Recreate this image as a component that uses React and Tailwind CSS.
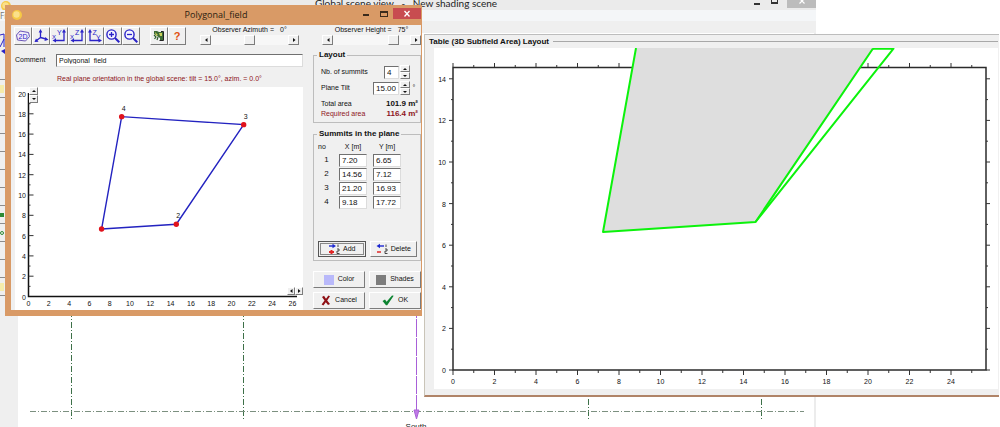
import React from "react";

const UI = "font-['Liberation_Sans',sans-serif]";
const RAISED = "border border-t-white border-l-white border-r-[#7c7c7c] border-b-[#7c7c7c] bg-[#f0f0f0]";
const SUNKEN = "border border-t-[#707070] border-l-[#707070] border-r-[#dcdcdc] border-b-[#dcdcdc] bg-white";

/* ---------- small drawings ---------- */

function Sun() {
  return (
    <svg viewBox="0 0 12 12" className="size-3 shrink-0" aria-hidden="true">
      <circle cx="6" cy="6" r="5" fill="#f6c945" />
      <circle cx="5.5" cy="5.5" r="3.2" fill="#fbe08a" />
    </svg>
  );
}

function Arrow({ dir }) {
  const points = {
    left: "5.5,2 5.5,6 3,4",
    right: "3,2 3,6 5.5,4",
    up: "2,5 6,5 4,3",
    down: "2,3 6,3 4,5",
  }[dir];
  return (
    <svg viewBox="0 0 8 8" className="size-2 shrink-0" aria-hidden="true">
      <polygon points={points} fill="#111" />
    </svg>
  );
}

function AxesIcon({ kind }) {
  const blue = "#2a22c8";
  const common = { viewBox: "0 0 16 16", className: "size-4", "aria-hidden": true };
  const label = { fontSize: 7, fill: blue, fontFamily: "Liberation Sans, sans-serif" };
  if (kind === "2d") {
    return (
      <svg {...common}>
        <path d="M1.5 7 L5 3 L13.500 4.500 L14.500 8.500 L10.500 13 L2.500 12 Z" fill="#f1edf9" stroke="#6a55b8" strokeWidth="1" />
        <text x="3.5" y="11" {...label}>2D</text>
      </svg>
    );
  }
  if (kind === "3d") {
    return (
      <svg {...common} stroke={blue} fill={blue} strokeWidth="1.3">
        <path d="M7.500 9.5 V3 M7.500 9.5 L13 11 M7.500 9.5 L3.500 12.500" fill="none" />
        <path d="M7.500 1 L9.3 4.500 H5.7 Z M15.500 11.700 L11.500 13 L12.300 9 Z M1.500 14 L3 10.500 L5.500 13.8 Z" stroke="none" />
      </svg>
    );
  }
  if (kind === "zy") {
    return (
      <svg {...common}>
        <path d="M3 3 V12.5 H12" fill="none" stroke={blue} strokeWidth="1.3" />
        <path d="M3 1 L5 4.5 H1 Z M15 12.5 L11.5 14.5 V10.5 Z" fill={blue} />
        <text x="5.5" y="6.5" {...label}>Z</text>
        <text x="9" y="11.500" {...label}>Y</text>
      </svg>
    );
  }
  return (
    <svg {...common}>
      <path d="M13 3 V12.5 H4" fill="none" stroke={blue} strokeWidth="1.3" />
      <path d="M13 1 L15 4.5 H11 Z M1.5 12.5 L5 14.5 V10.5 Z" fill={blue} />
      <text x="6" y="6.5" {...label}>{kind === "xy" ? "Y" : "Z"}</text>
      <text x="1" y="10.500" {...label} fontSize="6">X</text>
    </svg>
  );
}

function ZoomIcon({ plus }) {
  return (
    <svg viewBox="0 0 16 16" className="size-4" fill="none" stroke="#2a22c8" aria-hidden="true">
      <circle cx="6.5" cy="6.5" r="4.6" strokeWidth="1.4" fill="#f4f4ff" />
      <path d="M10 10 L14.3 14.3" strokeWidth="2" />
      <path d={plus ? "M4 6.5 H9 M6.5 4 V9" : "M4 6.5 H9"} strokeWidth="1.3" />
    </svg>
  );
}

function ExitIcon() {
  return (
    <svg viewBox="0 0 16 16" className="size-4" aria-hidden="true">
      <path d="M3 3 H6 L8 4 H12 V12 H9 V10 L6 8 L3 6 Z" fill="#3b6a35" />
      <path d="M4 4 L7 7 L5 8 Z M8 5 H11 V8 H9 Z" fill="#c9cf5a" />
      <path d="M10 3.500 H12.500 V12.500 H8.500" fill="none" stroke="#222" strokeWidth="1" />
      <path d="M3 7 L5 9 L3.500 11 M7 9 L6 12" fill="none" stroke="#2d5c2b" strokeWidth="1.200" />
    </svg>
  );
}

function SummitIcon({ add }) {
  return (
    <svg viewBox="0 0 13 12" className="h-3 w-[13px] shrink-0" aria-hidden="true">
      {add ? (
        <>
          <path d="M1 3 H5" stroke="#1d28d0" strokeWidth="1.4" />
          <path d="M8 3 L4.5 .8 V5.2 Z" fill="#1d28d0" />
          <path d="M1 9 H6 M3.500 7 V11" stroke="#e02828" strokeWidth="2" />
        </>
      ) : (
        <>
          <path d="M4 3 H8" stroke="#1d28d0" strokeWidth="1.4" />
          <path d="M.5 3 L4 .8 V5.2 Z" fill="#1d28d0" />
          <path d="M1 9 H5" stroke="#e02828" strokeWidth="1.5" />
        </>
      )}
      <path d="M10 1.5 V4 M9 6 H11 V8 H9 V10.5 H11.5" fill="none" stroke="#333" strokeWidth=".9" />
    </svg>
  );
}

function CrossMark() {
  return (
    <svg viewBox="0 0 10 11" className="h-[11px] w-2.5" aria-hidden="true">
      <path d="M1 2 L3 .8 L5 3.8 L7.4 .6 L9 1.2 L6.2 5.4 L9 9 L7 10 L4.8 7.2 L2.4 10.4 L.6 9.6 L3.5 5.4 Z" fill="#8e0f14" />
    </svg>
  );
}

function CheckMark() {
  return (
    <svg viewBox="0 0 12 11" className="h-[11px] w-3" aria-hidden="true">
      <path d="M.5 6 L3 4.600 L4.6 6.800 L10 .6 L11.7 .8 L5.200 10.300 H4 Z" fill="#0d8431" />
    </svg>
  );
}

/* ---------- background window ---------- */

const sideTools = ["", "paper", "", "", "", "", "", "", "flag", "loop", "", "", "paper"];

function SceneWindow() {
  return (
    <section className="absolute inset-y-0 left-0 flex w-[816px] flex-col overflow-hidden bg-white">
      <header className="flex h-2.5 shrink-0 bg-[#ebebeb] font-['Lato',sans-serif]">
        <div className="w-[315px]"><Sun /></div>
        <h1 className="flex-1 text-[10px] leading-[6px] whitespace-pre text-[#222]">Global scene view   -   New shading scene</h1>
        <div className="flex h-2 items-start gap-[9px]">
          <button aria-label="Minimize scene" className="flex h-1.5 w-2 items-center pt-px"><span className="h-0.5 w-1.5 bg-[#333]" /></button>
          <button aria-label="Restore scene" className="h-1 w-[7px] border border-t-0 border-b-2 border-[#333]" />
          <button aria-label="Close scene" className="flex h-2 w-[29px] items-start justify-center bg-[#bcbcbc]">
            <svg viewBox="0 0 6 4" className="h-1 w-1.5" stroke="white" strokeWidth="1.2" aria-hidden="true"><path d="M0 -2 L5.500 3.500 M6 -2 L.5 3.500" /></svg>
          </button>
        </div>
      </header>
      <nav className="h-[11px] shrink-0 bg-[#f4f6f8] text-[8px] leading-[12px] text-[#777]">Fi</nav>
      <div className="h-3 shrink-0 bg-[#efefef]" />
      <div className="flex min-h-0 flex-1">
        <aside className="w-[18px] shrink-0 bg-[#efefef]">
          <svg viewBox="0 26 18 29" className="h-[29px] w-[18px]" aria-hidden="true">
            <path d="M0 28 L4 27 V40 M4 32 L0 40" stroke="#2a22c8" fill="none" />
            <path d="M1 44 L5 42 V47 Z" fill="#2a22c8" />
          </svg>
          {sideTools.map((mark, i) => (
            <div key={i} className="flex h-[18px] items-center border-b border-[#8c8c8c]">
              {mark === "flag" && <span className="h-1 w-1 bg-[#2c8a35]" />}
              {mark === "loop" && <span className="h-1 w-1 rounded-full border border-[#2c8a35]" />}
              {mark === "paper" && <span className="h-2 w-1 bg-[#f5ecab]" />}
            </div>
          ))}
        </aside>
        <svg viewBox="18 33 796 394" className="h-[394px] w-[796px]" role="img" aria-label="Global scene">
          <g stroke="#3d7048" strokeDasharray="6 2 1 2" fill="none">
            <path d="M71.5 300 V419 M243.5 300 V419 M588.5 300 V419 M761.5 300 V419" />
            <path d="M30 411.5 H804" stroke="#7c9080" />
          </g>
          <path d="M416.5 300 V412" stroke="#a860d8" strokeDasharray="18 1" />
          <path d="M414 410 L416.5 419 L419 410 Z" fill="#c07ae6" stroke="#a860d8" />
          <text x="416" y="429" textAnchor="middle" fontSize="8" fill="#222" fontFamily="Liberation Sans, sans-serif">South</text>
        </svg>
        <div className="w-0.5 bg-[#ececec]" />
      </div>
    </section>
  );
}

/* ---------- subfield layout window ---------- */

function TableLayoutWindow() {
  const x = (v) => 453 + v * 20.75;
  const y = (v) => 370 - v * 20.8;
  const xs = Array.from({ length: 26 }, (_, i) => i);
  const ys = Array.from({ length: 15 }, (_, i) => i);
  return (
    <section className="absolute top-[34px] right-px left-[424px] border-t border-l border-b-2 border-t-[#bdbdbd] border-l-[#c9c4b8] border-b-[#b08468] bg-[#f0f0f0] pr-px pb-1.5 pl-1">
      <div className="flex h-[13px] items-center gap-1">
        <h2 className={`${UI} text-[8px] leading-[13px] font-bold text-[#111]`}>Table (3D Subfield Area) Layout</h2>
        <div className="h-px flex-1 bg-[#a8a8a8]" />
      </div>
      <div className="pl-[5px]">
        <svg viewBox="434 48 564 341" className="block h-auto w-full bg-white" role="img" aria-label="Subfield area plot" fontFamily="Liberation Sans, sans-serif" fontSize="7" fill="#111">
          <rect x="453" y="67.5" width="533" height="302.5" fill="white" stroke="#2b2b2b" strokeWidth="1.5" />
          <g stroke="#333">
            {xs.map((v) => (
              <path key={v} d={`M${x(v)} 370 v${v % 2 ? 3 : 5} M${x(v)} 67 v${v % 2 ? -2 : -4}`} />
            ))}
            {ys.map((v) => (
              <path key={v} d={`M453 ${y(v)} h${v % 2 ? -2 : -4} M986 ${y(v)} h${v % 2 ? 2 : 4}`} />
            ))}
          </g>
          {xs.filter((v) => v % 2 === 0).map((v) => (
            <text key={v} x={x(v)} y="384" textAnchor="middle">{v}</text>
          ))}
          {ys.filter((v) => v % 2 === 0).map((v) => (
            <text key={v} x="446" y={y(v) + 3} textAnchor="end">{v}</text>
          ))}
          <path d="M636 48 L603 232 L755.5 222 L873 48 Z" fill="#dedede" />
          <g fill="none" stroke="#0cf20c" strokeWidth="2" strokeLinejoin="round">
            <path d="M636 48 L603 232 L755.5 222 L873 48.5" />
            <path d="M873 48.7 H893.5 L755.5 222" />
          </g>
        </svg>
      </div>
    </section>
  );
}

/* ---------- polygon dialog ---------- */

function ScrollControl({ id, label, value, min, max, shown }) {
  return (
    <div className="w-[99px]">
      <label htmlFor={id} className="flex h-2.5 items-center justify-center gap-1.5 leading-[10px] whitespace-pre">
        <span>{label} =</span><span>{shown}</span>
      </label>
      <div className="flex h-2.5 bg-[#f7f7f7]">
        <button aria-label={`Decrease ${label}`} className={`flex w-[11px] items-center justify-center ${RAISED}`}><Arrow dir="left" /></button>
        <input
          id={id}
          type="range"
          min={min}
          max={max}
          defaultValue={value}
          className="h-2.5 min-w-0 flex-1 appearance-none bg-[#f7f7f7] [&::-webkit-slider-thumb]:h-2.5 [&::-webkit-slider-thumb]:w-[11px] [&::-webkit-slider-thumb]:appearance-none [&::-webkit-slider-thumb]:border [&::-webkit-slider-thumb]:border-t-white [&::-webkit-slider-thumb]:border-r-[#7c7c7c] [&::-webkit-slider-thumb]:border-b-[#7c7c7c] [&::-webkit-slider-thumb]:border-l-white [&::-webkit-slider-thumb]:bg-[#f0f0f0]"
        />
        <button aria-label={`Increase ${label}`} className={`flex w-[11px] items-center justify-center ${RAISED}`}><Arrow dir="right" /></button>
      </div>
    </div>
  );
}

function ToolButton({ label, children }) {
  return (
    <button aria-label={label} className={`flex size-[18px] items-center justify-center ${RAISED}`}>{children}</button>
  );
}

function Spinner({ name }) {
  return (
    <div className="flex w-2.5 flex-col">
      <button aria-label={`Increase ${name}`} className={`flex h-[7px] items-center justify-center overflow-hidden ${RAISED}`}><Arrow dir="up" /></button>
      <button aria-label={`Decrease ${name}`} className={`flex h-[7px] items-center justify-center overflow-hidden ${RAISED}`}><Arrow dir="down" /></button>
    </div>
  );
}

const summits = [
  { no: 1, x: "7.20", y: "6.65" },
  { no: 2, x: "14.56", y: "7.12" },
  { no: 3, x: "21.20", y: "16.93" },
  { no: 4, x: "9.18", y: "17.72" },
];

function PolygonPlot() {
  const px = (v) => 28.5 + v * 10.15;
  const py = (v) => 296.5 - v * 10.15;
  const xs = Array.from({ length: 14 }, (_, i) => i * 2);
  const ys = Array.from({ length: 21 }, (_, i) => i);
  const outline = summits.map((s) => `${px(+s.x)},${py(+s.y)}`).join(" ");
  return (
    <div className="relative">
      <svg viewBox="15 87 288 223" className="block h-[223px] w-72 bg-white" role="img" aria-label="Polygon plot" fontFamily="Liberation Sans, sans-serif" fontSize="7" fill="#111">
        <path d="M28.5 93 V296.5 H297" fill="none" stroke="#111" strokeWidth="1.5" />
        <g stroke="#333">
          {ys.slice(1).map((v) => (
            <path key={v} d={`M28.5 ${py(v)} h${v % 2 ? 2 : 5}`} />
          ))}
        </g>
        {xs.map((v) => (
          <text key={v} x={px(v)} y="306" textAnchor="middle">{v}</text>
        ))}
        {ys.filter((v) => v % 2 === 0).map((v) => (
          <text key={v} x="26" y={py(v) + 3} textAnchor="end">{v}</text>
        ))}
        <polygon points={outline} fill="none" stroke="#2323c0" strokeWidth="1.4" />
        {summits.map((s) => (
          <circle key={s.no} cx={px(+s.x)} cy={py(+s.y)} r="2.7" fill="#e0121c" />
        ))}
        {summits.slice(1).map((s) => (
          <text key={s.no} x={px(+s.x) + 2} y={py(+s.y) - 6} textAnchor="middle">{s.no}</text>
        ))}
      </svg>
      <div className="absolute top-0 left-3.5 flex w-[9px] flex-col">
        <button aria-label="Scroll up" className={`flex h-2 items-center justify-center overflow-hidden ${RAISED}`}><Arrow dir="up" /></button>
        <button aria-label="Scroll down" className={`flex h-2 items-center justify-center overflow-hidden ${RAISED}`}><Arrow dir="down" /></button>
      </div>
      <div className="absolute right-0 bottom-[15px] flex h-2">
        <button aria-label="Scroll left" className={`flex w-2 items-center justify-center overflow-hidden ${RAISED}`}><Arrow dir="left" /></button>
        <button aria-label="Scroll right" className={`flex w-2 items-center justify-center overflow-hidden ${RAISED}`}><Arrow dir="right" /></button>
      </div>
    </div>
  );
}

function PushButton({ icon, children }) {
  return (
    <button className={`flex h-[17px] items-center justify-center gap-1 ${RAISED}`}>{icon}{children}</button>
  );
}

function PolygonDialog() {
  const cell = `h-[13px] w-7 px-0.5 text-[8px] leading-[11px] ${SUNKEN}`;
  return (
    <section className="absolute top-[5px] left-[5px] w-[417px] bg-[#d99a66] pr-px pb-1.5 pl-1.5">
      <header className="grid h-5 grid-cols-[1fr_auto_1fr] items-center font-['Open_Sans','Noto_Sans',sans-serif]">
        <Sun />
        <h2 className="text-[9px] text-[#2a1c10]">Polygonal_field</h2>
        <div className="flex h-full items-start justify-end pt-[3px]">
          <button aria-label="Minimize" className="flex h-[11px] w-[18px] items-end justify-center pb-[3px]"><span className="h-0.5 w-1.5 bg-[#3a2a1c]" /></button>
          <button aria-label="Maximize" className="flex h-[11px] w-[18px] items-center justify-center"><span className="h-1.5 w-2 border border-t-2 border-[#3a2a1c]" /></button>
          <button aria-label="Close" className="flex h-[11px] w-7 items-center justify-center bg-[#c84c50]">
            <svg viewBox="0 0 8 8" className="size-2" stroke="white" strokeWidth="1.3" aria-hidden="true"><path d="M1.5 1 L6.5 6.5 M6.5 1 L1.5 6.5" /></svg>
          </button>
        </div>
      </header>
      <div className={`bg-[#f0f0f0] text-[7px] text-[#111] ${UI}`}>
        <div className="flex h-[21px] justify-between pl-[3px]">
          <div className="flex pt-0.5">
            <ToolButton label="2D view"><AxesIcon kind="2d" /></ToolButton>
            <ToolButton label="Perspective"><AxesIcon kind="3d" /></ToolButton>
            <ToolButton label="Top view"><AxesIcon kind="xy" /></ToolButton>
            <ToolButton label="Front view"><AxesIcon kind="xz" /></ToolButton>
            <ToolButton label="Side view"><AxesIcon kind="zy" /></ToolButton>
            <ToolButton label="Zoom in"><ZoomIcon plus /></ToolButton>
            <ToolButton label="Zoom out"><ZoomIcon /></ToolButton>
            <div className="w-2.5" />
            <ToolButton label="Exit"><ExitIcon /></ToolButton>
            <ToolButton label="Help"><span className="text-[11px] font-bold text-[#e05010]">?</span></ToolButton>
          </div>
          <div className="flex gap-[23px]">
            <ScrollControl id="azimuth" label="Observer Azimuth" value={0} min={-90} max={90} shown="0°" />
            <ScrollControl id="height" label="Observer Height" value={75} min={0} max={90} shown="75°" />
          </div>
        </div>
        <div className="flex justify-between pl-1">
          <div className="w-72 pt-2">
            <div className="flex h-[13px] items-center">
              <label htmlFor="comment" className="w-[41px]">Comment</label>
              <input id="comment" defaultValue="Polygonal_field" className={`h-[13px] min-w-0 flex-1 px-0.5 ${SUNKEN}`} />
            </div>
            <p className="mt-1.5 mb-0.5 pl-[42px] leading-3 text-[#8e1522]">Real plane orientation in the global scene: tilt = 15.0°, azim. = 0.0°</p>
            <PolygonPlot />
          </div>
          <div className="flex w-[108px] flex-col pt-1">
            <fieldset className="border border-[#bdbdbd] pr-0.5 pb-[3px] pl-[7px]">
              <legend className="-ml-1 px-0.5 text-[8px] leading-[10px] font-bold">Layout</legend>
              <div className="mt-[5px] flex h-3.5 items-center">
                <label htmlFor="count" className="flex-1">Nb. of summits</label>
                <input id="count" defaultValue="4" className={`mr-px h-[13px] w-[15px] px-0.5 text-[8px] ${SUNKEN}`} />
                <Spinner name="summits" />
                <span className="w-2" />
              </div>
              <div className="mt-0.5 flex h-3.5 items-center">
                <label htmlFor="tilt" className="flex-1">Plane Tilt</label>
                <input id="tilt" defaultValue="15.00" className={`mr-px h-[13px] w-[26px] px-0.5 text-[8px] ${SUNKEN}`} />
                <Spinner name="tilt" />
                <span className="w-2 text-center">°</span>
              </div>
              <dl className="mt-1 leading-[10px]">
                <div className="flex justify-between"><dt>Total area</dt><dd className="text-[8px] font-bold">101.9 m²</dd></div>
                <div className="flex justify-between text-[#8e1522]"><dt>Required area</dt><dd className="text-[8px] font-bold">116.4 m²</dd></div>
              </dl>
            </fieldset>
            <fieldset className="mt-1.5 border border-[#bdbdbd] pr-[3px] pb-[3px] pl-1">
              <legend className="-ml-px px-0.5 text-[8px] leading-[10px] font-bold">Summits in the plane</legend>
              <table className="mt-0.5 table-fixed border-collapse">
                <thead>
                  <tr className="h-3 leading-[10px]">
                    <th scope="col" className="w-[21px] p-0 text-left font-normal">no</th>
                    <th scope="col" className="w-[34px] p-0 pr-1.5 text-center font-normal">X [m]</th>
                    <th scope="col" className="w-[34px] p-0 pr-1.5 text-center font-normal">Y [m]</th>
                  </tr>
                </thead>
                <tbody>
                  {summits.map((s) => (
                    <tr key={s.no} className="h-3.5 leading-[10px]">
                      <td className="p-0 pr-1 text-center text-[8px]">{s.no}</td>
                      <td className="p-0"><input aria-label={`X of summit ${s.no}`} defaultValue={s.x} className={`block ${cell}`} /></td>
                      <td className="p-0"><input aria-label={`Y of summit ${s.no}`} defaultValue={s.y} className={`block ${cell}`} /></td>
                    </tr>
                  ))}
                </tbody>
              </table>
              <div className="mt-8 grid grid-cols-2 gap-1">
                <button className="flex h-4 items-center justify-center gap-0.5 border border-[#555] bg-[#f0f0f0] outline outline-offset-[-3px] outline-[#888]"><SummitIcon add />Add</button>
                <button className={`flex h-4 items-center justify-center gap-0.5 ${RAISED}`}><SummitIcon />Delete</button>
              </div>
            </fieldset>
            <div className="mt-2.5 grid grid-cols-2 gap-x-1 gap-y-1">
              <PushButton icon={<span className="size-2.5 bg-[#b9b9fa]" />}>Color</PushButton>
              <PushButton icon={<span className="size-2.5 bg-[#7d7d7d]" />}>Shades</PushButton>
              <PushButton icon={<CrossMark />}>Cancel</PushButton>
              <PushButton icon={<CheckMark />}>OK</PushButton>
            </div>
          </div>
        </div>
      </div>
    </section>
  );
}

export default function App() {
  return (
    <main className="relative min-h-screen w-full overflow-hidden bg-white">
      <SceneWindow />
      <TableLayoutWindow />
      <PolygonDialog />
    </main>
  );
}
